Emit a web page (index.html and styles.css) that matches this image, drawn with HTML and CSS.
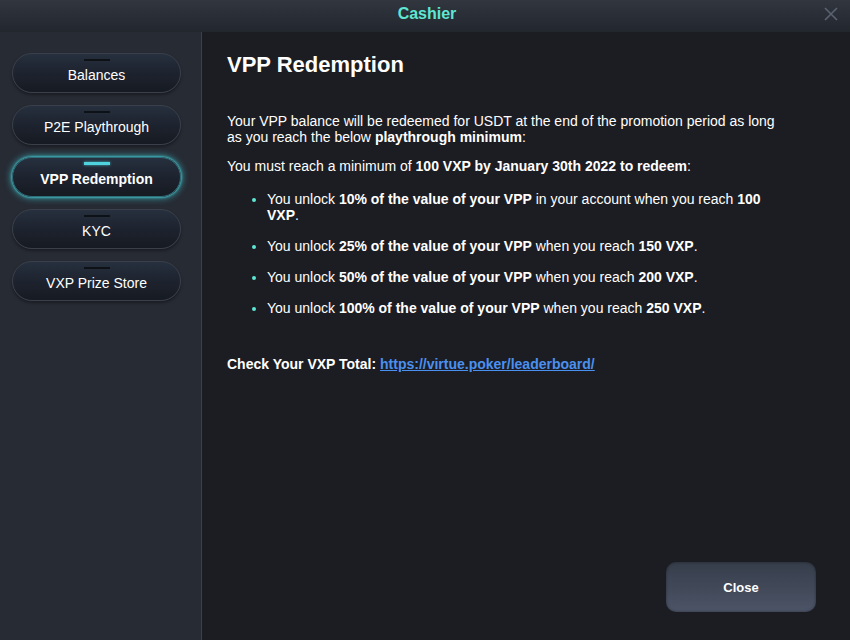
FILE: index.html
```html
<!DOCTYPE html>
<html lang="en">
<head>
<meta charset="utf-8">
<title>Cashier</title>
<link rel="stylesheet" href="styles.css">
</head>
<body>
<div class="window">
  <header class="titlebar">
    <span class="title">Cashier</span>
    <button class="x-btn" aria-label="Close">
      <svg width="16" height="16" viewBox="0 0 16 16"><path d="M2 2 L14 14 M14 2 L2 14" stroke="#5b6270" stroke-width="1.6" fill="none"/></svg>
    </button>
  </header>
  <div class="body">
    <nav class="sidebar">
      <button class="nav-btn">Balances</button>
      <button class="nav-btn">P2E Playthrough</button>
      <button class="nav-btn active">VPP Redemption</button>
      <button class="nav-btn">KYC</button>
      <button class="nav-btn">VXP Prize Store</button>
    </nav>
    <main class="content">
      <h1 class="heading">VPP Redemption</h1>
      <p class="para first">Your VPP balance will be redeemed for USDT at the end of the promotion period as long as you reach the below <b>playthrough minimum</b>:</p>
      <p class="para">You must reach a minimum of <b>100 VXP by January 30th 2022 to redeem</b>:</p>
      <ul class="list">
        <li>You unlock <b>10% of the value of your VPP</b> in your account when you reach <b>100 VXP</b>.</li>
        <li>You unlock <b>25% of the value of your VPP</b> when you reach <b>150 VXP</b>.</li>
        <li>You unlock <b>50% of the value of your VPP</b> when you reach <b>200 VXP</b>.</li>
        <li>You unlock <b>100% of the value of your VPP</b> when you reach <b>250 VXP</b>.</li>
      </ul>
      <p class="para check"><b>Check Your VXP Total: </b><a class="link" href="#">https://virtue.poker/leaderboard/</a></p>
      <div class="actions">
        <button class="close-btn">Close</button>
      </div>
    </main>
  </div>
</div>
</body>
</html>
```

FILE: styles.css
```css
* { box-sizing: border-box; }
html, body { margin: 0; padding: 0; }
body {
  width: 850px;
  height: 640px;
  overflow: hidden;
  background: #1c1d22;
  font-family: "Liberation Sans", Arial, sans-serif;
  color: #ffffff;
}
.window {
  display: flex;
  flex-direction: column;
  height: 640px;
}
.titlebar {
  position: relative;
  height: 32px;
  flex: none;
  display: flex;
  align-items: center;
  justify-content: center;
  padding-bottom: 4px;
  background: linear-gradient(#31363f, #22262d);
}
.title {
  color: #5ee6d2;
  font-weight: bold;
  font-size: 16px;
  margin-left: 4px;
}
.x-btn {
  position: absolute;
  right: 10px;
  top: 5px;
  width: 18px;
  height: 18px;
  padding: 0;
  border: 0;
  background: none;
  display: flex;
  align-items: center;
  justify-content: center;
}
.body {
  flex: 1;
  display: flex;
  min-height: 0;
}
.sidebar {
  width: 202px;
  flex: none;
  background: #272b34;
  border-right: 1px solid #3c4049;
  display: flex;
  flex-direction: column;
  gap: 12px;
  padding: 21px 0 0 12px;
}
.nav-btn {
  position: relative;
  width: 169px;
  height: 40px;
  border-radius: 20px;
  border: 1px solid #3a3f49;
  background: linear-gradient(#26303e 0%, #1e2430 45%, #161a21 100%);
  box-shadow: 0 2px 3px rgba(0,0,0,0.35);
  color: #ffffff;
  font-family: "Liberation Sans", Arial, sans-serif;
  font-size: 14px;
  padding: 4px 0 0;
}
.nav-btn::before {
  content: "";
  position: absolute;
  top: 5px;
  left: 50%;
  width: 26px;
  height: 2px;
  margin-left: -13px;
  background: #0e1116;
}
.nav-btn.active {
  font-weight: bold;
  border-color: #2f6f7a;
  box-shadow: 0 0 6px 2px rgba(64, 200, 210, 0.55), 0 0 2px 1px rgba(80, 220, 230, 0.6);
}
.nav-btn.active::before {
  background: #4fd3dc;
  height: 3px;
  top: 4px;
  box-shadow: 0 0 3px rgba(79, 211, 220, 0.8);
}
.content {
  flex: 1;
  display: flex;
  flex-direction: column;
  padding: 0 0 0 25px;
  min-width: 0;
}
.heading {
  margin: 20px 0 0;
  font-size: 22px;
  line-height: 26px;
  font-weight: bold;
}
.para {
  margin: 0 0 13px;
  width: 555px;
  font-size: 14px;
  line-height: 16px;
}
.para.first { margin-top: 35px; }
.list {
  margin: 4px 0 0;
  padding: 0 0 0 40px;
  width: 555px;
  font-size: 14px;
  line-height: 16px;
}
.list li {
  margin-bottom: 15px;
}
.list li::marker {
  color: #5ee6d2;
  font-size: 13px;
}
.check {
  margin-top: 25px;
}
.link {
  color: #4a90f0;
  font-weight: bold;
  text-decoration: underline;
}
.actions {
  margin-top: auto;
  display: flex;
  justify-content: flex-end;
  padding: 0 34px 28px 0;
}
.close-btn {
  width: 150px;
  height: 50px;
  border-radius: 10px;
  border: 0;
  background: linear-gradient(#363d4a, #4c5467);
  box-shadow: inset 0 0 3px rgba(0,0,0,0.4);
  color: #ffffff;
  font-family: "Liberation Sans", Arial, sans-serif;
  font-weight: bold;
  font-size: 13px;
}
```
